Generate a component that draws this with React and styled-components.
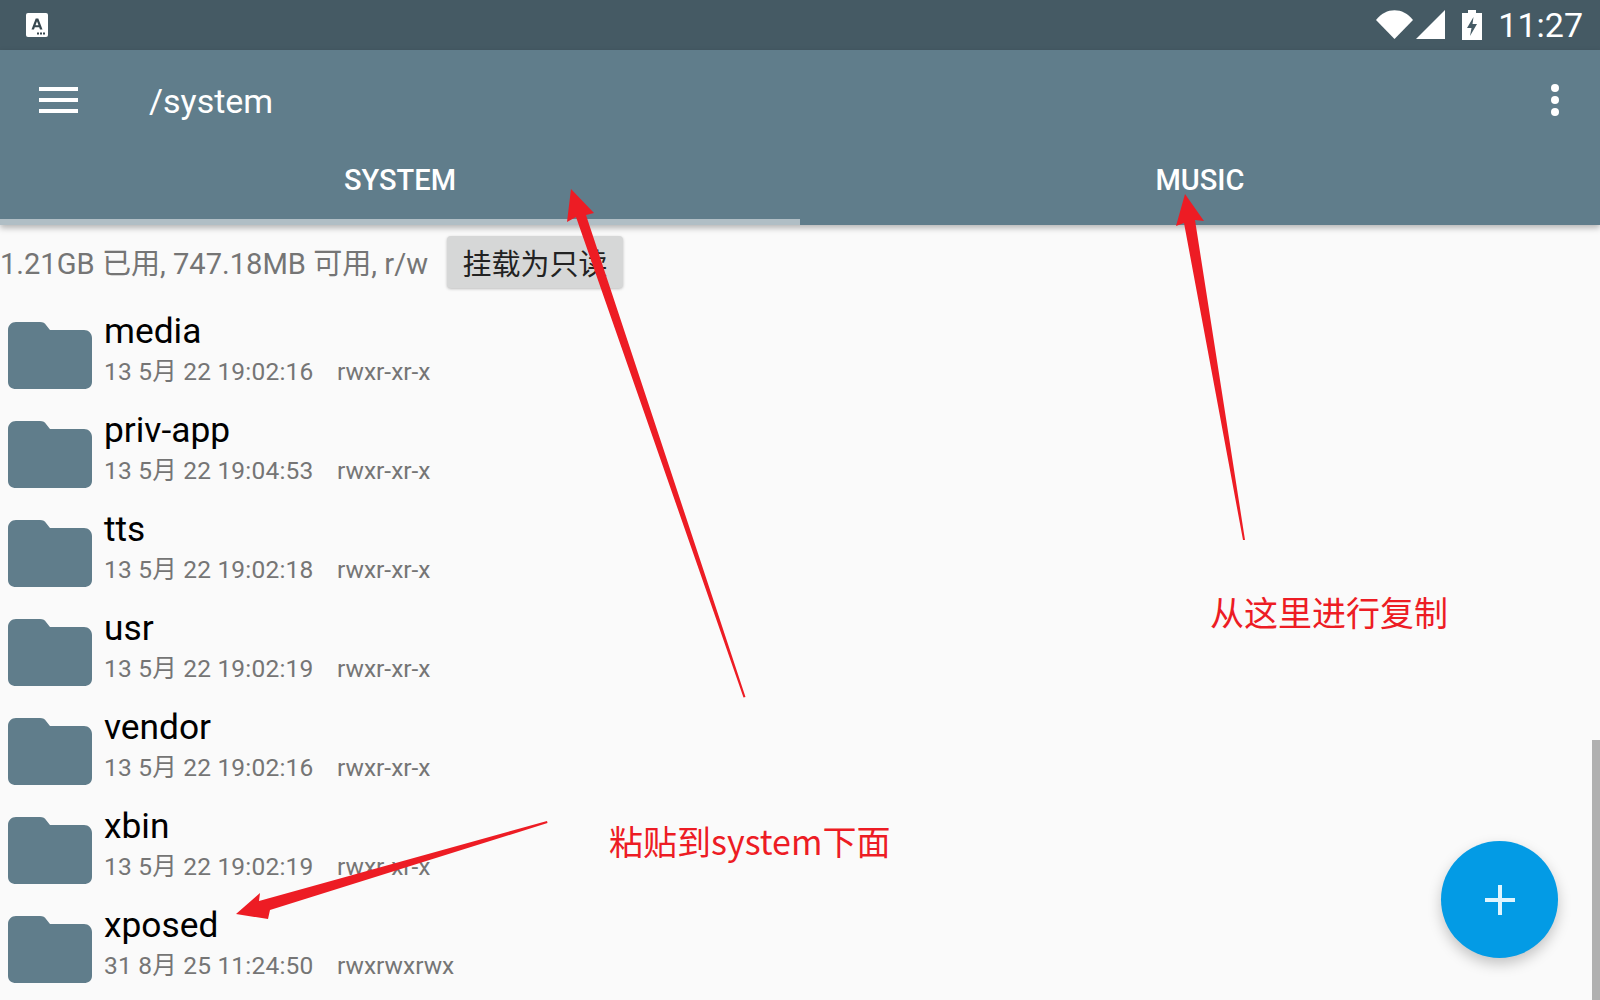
import React from 'react';
import styled, { createGlobalStyle } from 'styled-components';

const GlobalStyle = createGlobalStyle`
  html, body {
    margin: 0;
    padding: 0;
    background: #fafafa;
  }
`;

const Page = styled.div`
  position: relative;
  width: 1600px;
  height: 1000px;
  overflow: hidden;
  background: #fafafa;
  font-family: Roboto, "Noto Sans CJK SC", sans-serif;
`;

const StatusBar = styled.div`
  height: 50px;
  background: #455a64;
  display: flex;
  align-items: center;
  padding: 0 17px 0 26px;
  color: #fff;
`;

const StatusRight = styled.div`
  margin-left: auto;
  display: flex;
  align-items: center;
`;

const Clock = styled.span`
  font-size: 34px;
  line-height: 50px;
  margin-left: 16px;
`;

const AppBar = styled.div`
  position: relative;
  background: #607d8b;
  box-shadow: 0 3px 6px rgba(0, 0, 0, 0.28);
`;

const TitleRow = styled.div`
  height: 100px;
  display: flex;
  align-items: center;
  padding: 0 41px 0 39px;
`;

const Title = styled.span`
  margin-left: 71px;
  font-size: 34px;
  color: #fff;
  position: relative;
  top: 1px;
`;

const MoreIcon = styled.svg`
  margin-left: auto;
`;

const Tabs = styled.div`
  display: flex;
  height: 75px;
`;

const Tab = styled.div`
  flex: 1;
  display: flex;
  align-items: flex-start;
  justify-content: center;
  padding-top: 10px;
  font-size: 29px;
  line-height: 40px;
  font-weight: 500;
  color: #fff;
  border-bottom: 6px solid ${(p) => (p.$active ? '#b0bec5' : 'transparent')};
`;

const InfoRow = styled.div`
  height: 77px;
  display: flex;
  align-items: center;
  box-sizing: border-box;
  padding-bottom: 4px;
`;

const InfoText = styled.span`
  font-size: 29.100px;
  color: #757575;
  white-space: nowrap;
  position: relative;
  top: -1px;
`;

const MountButton = styled.div`
  margin-left: 19px;
  width: 176px;
  height: 52px;
  display: flex;
  align-items: center;
  justify-content: center;
  background: #d6d7d7;
  border-radius: 4px;
  box-shadow: 0 1px 3px rgba(0, 0, 0, 0.25);
  font-size: 29px;
  color: #222;
`;

const List = styled.div`
  display: flex;
  flex-direction: column;
`;

const Row = styled.div`
  height: 99px;
  display: flex;
  box-sizing: border-box;
  padding: 0 0 0 8px;
`;

const FolderIcon = styled.svg`
  margin-top: 20px;
  flex: none;
`;

const RowText = styled.div`
  margin-left: 12px;
  display: flex;
  flex-direction: column;
  padding-top: 8px;
`;

const Name = styled.div`
  font-size: 35.300px;
  line-height: 44px;
  color: #000;
  margin-top: -1px;
`;

const Meta = styled.div`
  display: flex;
  font-size: 24.500px;
  line-height: 36px;
  color: #757575;
  margin-top: 1px;
`;

const MetaDate = styled.span`
  width: 233px;
  white-space: nowrap;
  letter-spacing: 0.2px;
`;

const Fab = styled.div`
  position: absolute;
  left: 1441px;
  top: 841px;
  width: 117px;
  height: 117px;
  border-radius: 50%;
  background: #039be5;
  box-shadow: 0 6px 14px rgba(0, 0, 0, 0.22);
  display: flex;
  align-items: center;
  justify-content: center;
`;

const ScrollThumb = styled.div`
  position: absolute;
  right: 0;
  top: 740px;
  width: 8px;
  height: 260px;
  background: #b0b0b0;
`;

const Arrows = styled.svg`
  position: absolute;
  left: 0;
  top: 0;
  pointer-events: none;
`;

const Note = styled.div`
  position: absolute;
  left: ${(p) => p.$x}px;
  top: ${(p) => p.$y}px;
  font-family: "Noto Sans CJK SC", sans-serif;
  font-size: 34px;
  line-height: 44px;
  color: #ed1c24;
  white-space: nowrap;
`;

const folders = [
  ['media', '13 5月 22 19:02:16', 'rwxr-xr-x'],
  ['priv-app', '13 5月 22 19:04:53', 'rwxr-xr-x'],
  ['tts', '13 5月 22 19:02:18', 'rwxr-xr-x'],
  ['usr', '13 5月 22 19:02:19', 'rwxr-xr-x'],
  ['vendor', '13 5月 22 19:02:16', 'rwxr-xr-x'],
  ['xbin', '13 5月 22 19:02:19', 'rwxr-xr-x'],
  ['xposed', '31 8月 25 11:24:50', 'rwxrwxrwx'],
];

const Folder = () => (
  <FolderIcon width="84" height="68" viewBox="0 0 84 68">
    <path
      d="M8 0H32C35 0 37 1 38 3L42 8H76C80.500 8 84 11.500 84 16V60C84 64.500 80.500 67 76 67H8C3.500 67 0 64.500 0 60V8C0 3.500 3.500 0 8 0Z"
      fill="#607d8b"
    />
  </FolderIcon>
);

export default function App() {
  return (
    <Page>
      <GlobalStyle />
      <StatusBar>
        <svg width="22" height="24" viewBox="0 0 22 24">
          <rect width="22" height="24" rx="2" fill="#fff" />
          <path d="M5.500 16.500L9.700 5.500H12.300L16.500 16.500H14L13.200 14.300H8.800L8 16.500ZM9.500 12.300H12.500L11 8.200Z" fill="#37474f" />
          <rect x="11" y="19.500" width="2" height="2" fill="#37474f" />
          <rect x="14" y="19.500" width="2" height="2" fill="#37474f" />
          <rect x="17" y="19.500" width="2" height="2" fill="#37474f" />
        </svg>
        <StatusRight>
          <svg width="37" height="30" viewBox="0 0 37 30">
            <path d="M0 10C10-3 27-3 37 10L18.500 29Z" fill="#fff" />
          </svg>
          <svg width="30" height="30" viewBox="0 0 30 30" style={{ marginLeft: 3 }}>
            <path d="M0 29H29V0Z" fill="#fff" />
          </svg>
          <svg width="20" height="30" viewBox="0 0 20 30" style={{ marginLeft: 16 }}>
            <path d="M6 0H14V3H20V30H0V3H6Z" fill="#fff" />
            <path d="M11.500 7L5 18H9.500L8 26L15 14H10.500Z" fill="#455a64" />
          </svg>
          <Clock>11:27</Clock>
        </StatusRight>
      </StatusBar>
      <AppBar>
        <TitleRow>
          <svg width="39" height="26" viewBox="0 0 39 26">
            <rect y="0" width="39" height="4" fill="#fff" />
            <rect y="11" width="39" height="4" fill="#fff" />
            <rect y="22" width="39" height="4" fill="#fff" />
          </svg>
          <Title>/system</Title>
          <MoreIcon width="8" height="32" viewBox="0 0 8 32">
            <circle cx="4" cy="4" r="4" fill="#fff" />
            <circle cx="4" cy="16" r="4" fill="#fff" />
            <circle cx="4" cy="28" r="4" fill="#fff" />
          </MoreIcon>
        </TitleRow>
        <Tabs>
          <Tab $active>SYSTEM</Tab>
          <Tab>MUSIC</Tab>
        </Tabs>
      </AppBar>
      <InfoRow>
        <InfoText>1.21GB 已用, 747.18MB 可用, r/w</InfoText>
        <MountButton>挂载为只读</MountButton>
      </InfoRow>
      <List>
        {folders.map(([name, date, perms]) => (
          <Row key={name}>
            <Folder />
            <RowText>
              <Name>{name}</Name>
              <Meta>
                <MetaDate>{date}</MetaDate>
                <span>{perms}</span>
              </Meta>
            </RowText>
          </Row>
        ))}
      </List>
      <ScrollThumb />
      <Fab>
        <svg width="30" height="30" viewBox="0 0 30 30">
          <path d="M13 0H17V13H30V17H17V30H13V17H0V13H13Z" fill="#e1f5fe" />
        </svg>
      </Fab>
      <Arrows width="1600" height="1000" viewBox="0 0 1600 1000">
        <path d="M571 189L594 213L586 215L745.500 697L743.500 697.500L576 217L567 222Z" fill="#ed1c24" />
        <path d="M1185 194L1204 221L1195 220L1245 540L1243 540L1184 223L1176 226Z" fill="#ed1c24" />
        <path d="M547 821L547.500 823L270 910L268 919L236 914L260 893L259 901Z" fill="#ed1c24" />
      </Arrows>
      <Note $x={1210} $y={590}>从这里进行复制</Note>
      <Note $x={609} $y={819}>粘贴到system下面</Note>
    </Page>
  );
}
